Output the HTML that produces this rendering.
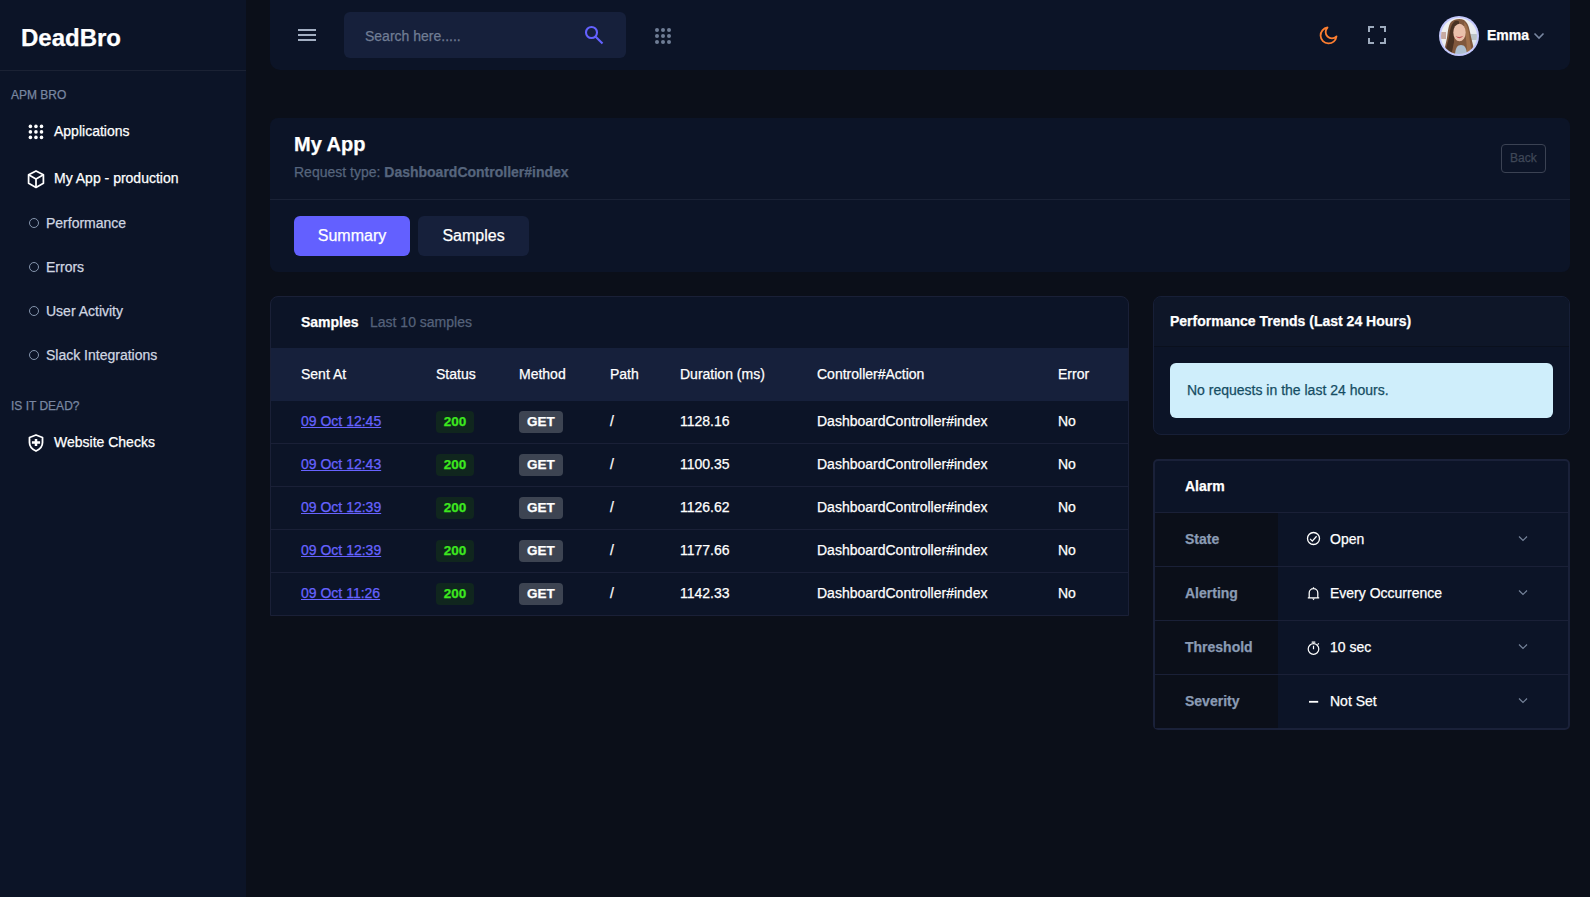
<!DOCTYPE html>
<html>
<head>
<meta charset="utf-8">
<style>
*{box-sizing:border-box;margin:0;padding:0}
html,body{width:1590px;height:897px;overflow:hidden}
body{-webkit-text-stroke:0.25px currentColor;background:#0b0f19;font-family:"Liberation Sans",sans-serif;font-size:14px;color:#fff;position:relative}
.abs{position:absolute}
.t{position:absolute;white-space:nowrap;line-height:1}
/* sidebar */
#sb{position:absolute;left:0;top:0;width:246px;height:897px;background:#0c1427}
#sb .div{position:absolute;left:0;top:70px;width:246px;height:1px;background:#1b2234}
.logo{left:21px;top:26px;font-size:24px;font-weight:bold;color:#fff}
.sec{font-size:12px;color:#7987a1;left:11px}
.nav{font-size:14px;color:#fff}
.nav2{font-size:14px;color:#d0d6e1}
.circ{position:absolute;width:10px;height:10px;border:1px solid #8595ad;border-radius:50%}
/* header */
#hdr{position:absolute;left:270px;top:-20px;width:1300px;height:90px;background:#0c1427;border-radius:10px}
#search{position:absolute;left:344px;top:12px;width:282px;height:46px;background:#16203b;border-radius:6px}
/* cards */
.card{position:absolute;background:#0c1427;border-radius:8px}
.btn{position:absolute;height:40px;border-radius:6px;font-size:16px;color:#fff;line-height:40px;text-align:center}
table{border-collapse:separate;border-spacing:0;table-layout:fixed}
.tbl{position:absolute;left:271px;top:348px;width:857px}
.tbl th{height:53px;background:#16203b;font-weight:normal;text-align:left;font-size:14px;color:#fff;padding:0 0 2px 0}
.tbl td{height:43px;border-bottom:1px solid #1a2037;font-size:14px;color:#fff;padding:0 0 2px 0;vertical-align:middle}
.tbl a{color:#6763ff;text-decoration:underline}
.b200{position:relative;top:1px;display:inline-block;width:38px;height:22px;line-height:22px;border-radius:4px;background:#10261e;color:#3de81e;font-weight:bold;font-size:13.5px;text-align:center}
.bget{position:relative;top:1px;display:inline-block;width:44px;height:22px;line-height:22px;border-radius:4px;background:#3d4452;color:#fff;font-weight:bold;font-size:13.5px;text-align:center}
.arow{position:absolute;left:1155px;width:413px;height:54px;border-top:1px solid #1a2037}
.arow .lab{position:absolute;left:0;top:0;width:123px;height:53px;background:#0b0f19}
.arow .lt{position:absolute;left:30px;top:19px;font-size:14px;font-weight:bold;color:#8a9bb4;line-height:1}
.arow .vt{position:absolute;left:175px;top:19px;font-size:14px;color:#fff;line-height:1}
.arow svg{position:absolute}
</style>
</head>
<body>
<div id="sb">
  <div class="t logo">DeadBro</div>
  <div class="div"></div>
  <div class="t sec" style="top:89px">APM BRO</div>
  <svg class="abs" style="left:28px;top:124px" width="16" height="16" viewBox="0 0 16 16" fill="#fff"><circle cx="2.4" cy="2.4" r="1.8"/><circle cx="7.95" cy="2.4" r="1.8"/><circle cx="13.5" cy="2.4" r="1.8"/><circle cx="2.4" cy="7.9" r="1.8"/><circle cx="7.95" cy="7.9" r="1.8"/><circle cx="13.5" cy="7.9" r="1.8"/><circle cx="2.4" cy="13.4" r="1.8"/><circle cx="7.95" cy="13.4" r="1.8"/><circle cx="13.5" cy="13.4" r="1.8"/></svg>
  <div class="t nav" style="left:54px;top:124px">Applications</div>
  <svg class="abs" style="left:27px;top:169px" width="18" height="20" viewBox="0 0 18 20" fill="none" stroke="#fff" stroke-width="1.75" stroke-linejoin="round">
    <path d="M9 1.9 L16.4 5.8 V14.3 L9 18.4 L1.6 14.3 V5.8 Z"/><path d="M1.6 5.8 L9 9.9 L16.4 5.8 M9 9.9 V18.4"/>
  </svg>
  <div class="t nav" style="left:54px;top:171px">My App - production</div>
  <div class="circ" style="left:29px;top:218px"></div>
  <div class="t nav2" style="left:46px;top:216px">Performance</div>
  <div class="circ" style="left:29px;top:262px"></div>
  <div class="t nav2" style="left:46px;top:260px">Errors</div>
  <div class="circ" style="left:29px;top:306px"></div>
  <div class="t nav2" style="left:46px;top:304px">User Activity</div>
  <div class="circ" style="left:29px;top:350px"></div>
  <div class="t nav2" style="left:46px;top:348px">Slack Integrations</div>
  <div class="t sec" style="top:400px">IS IT DEAD?</div>
  <svg class="abs" style="left:28px;top:434px" width="16" height="18" viewBox="0 0 16 18">
    <path d="M8 1 L14.5 3.5 V8.5 C14.5 12.5 11.5 15.5 8 17 C4.5 15.5 1.5 12.5 1.5 8.5 V3.5 Z" fill="none" stroke="#fff" stroke-width="1.8" stroke-linejoin="round"/>
    <path d="M8 4.9 V12.1 M3.9 8.5 H12.1" stroke="#fff" stroke-width="2.5"/>
  </svg>
  <div class="t nav" style="left:54px;top:435px">Website Checks</div>
</div>

<div id="hdr"></div>
<svg class="abs" style="left:298px;top:29px" width="18" height="12" viewBox="0 0 18 12" fill="#a3afc2">
  <rect x="0" y="0" width="18" height="2"/><rect x="0" y="5" width="18" height="2"/><rect x="0" y="10" width="18" height="2"/>
</svg>
<div id="search"></div>
<div class="t" style="left:365px;top:29px;font-size:14px;color:#707d94">Search here.....</div>
<svg class="abs" style="left:584px;top:25px" width="20" height="20" viewBox="0 0 20 20" fill="none" stroke="#6461ff" stroke-width="2.1">
  <circle cx="7.5" cy="7.5" r="5.5"/><path d="M11.4 11.4 L18.5 18.5"/>
</svg>
<svg class="abs" style="left:655px;top:28px" width="16" height="16" viewBox="0 0 16 16" fill="#6f7d95">
  <circle cx="2" cy="2" r="2"/><circle cx="8" cy="2" r="2"/><circle cx="14" cy="2" r="2"/>
  <circle cx="2" cy="8" r="2"/><circle cx="8" cy="8" r="2"/><circle cx="14" cy="8" r="2"/>
  <circle cx="2" cy="14" r="2"/><circle cx="8" cy="14" r="2"/><circle cx="14" cy="14" r="2"/>
</svg>
<svg class="abs" style="left:1318px;top:26px" width="20" height="20" viewBox="0 0 20 20" fill="none" stroke="#fd7e30" stroke-width="1.8" stroke-linejoin="round">
  <path d="M9.5 1.5 A8 8 0 1 0 18.5 10.5 A6.3 6.3 0 0 1 9.5 1.5 Z"/>
</svg>
<svg class="abs" style="left:1367px;top:25px" width="20" height="20" viewBox="0 0 20 20" fill="none" stroke="#9eabbe" stroke-width="2">
  <path d="M2 7 V2 H7 M13 2 H18 V7 M18 13 V18 H13 M7 18 H2 V13"/>
</svg>
<svg class="abs" style="left:1439px;top:16px" width="40" height="40" viewBox="0 0 40 40">
  <defs><clipPath id="avc"><circle cx="20" cy="20" r="18"/></clipPath>
  <filter id="avb" x="-20%" y="-20%" width="140%" height="140%"><feGaussianBlur stdDeviation="0.55"/></filter>
  <linearGradient id="avbg" x1="0" y1="0" x2="1" y2="1"><stop offset="0" stop-color="#f4f2ef"/><stop offset="0.6" stop-color="#e9ecee"/><stop offset="1" stop-color="#d4dde3"/></linearGradient></defs>
  <circle cx="20" cy="20" r="20" fill="#c4c8fc"/>
  <g clip-path="url(#avc)">
    <rect x="0" y="0" width="40" height="40" fill="url(#avbg)"/>
    <g filter="url(#avb)">
    <rect x="1" y="16" width="6" height="7" fill="#c8aaa2"/>
    <rect x="30" y="18" width="9" height="6" fill="#bcc4c6"/>
    <path d="M5 40 C5 33 7 27 8 22 C9 16 9 10 12 6 C15 3 21 2 25 4 C29 7 30 11 31 16 C32 22 34 28 35 34 L35 40 Z" fill="#80583c"/>
    <path d="M6 38 C7 31 9 26 10 21 C11 14 12 8 16 5 C19 4 21 5 20 8 C17 12 15 18 15 26 C14 31 13 36 12 40 Z" fill="#4a3024"/>
    <path d="M25 6 C29 10 30 16 30.5 22 C31 28 33 32 32 38 L28 38 C28 30 27 22 26 14 Z" fill="#a0704c"/>
    <ellipse cx="20.5" cy="16.5" rx="6.2" ry="8.8" fill="#eac0ab"/>
    <path d="M16.5 20 Q20.5 24.5 24.5 19.8 Q20.5 22 16.5 20 Z" fill="#c04f55"/>
    <path d="M16 40 C16 32 18.5 29 22 29 C25.5 29 28 32 28 40 Z" fill="#aebfd0"/>
    </g>
  </g>
</svg>
<div class="t" style="left:1487px;top:28px;font-size:14px;font-weight:bold;color:#fff">Emma</div>
<svg class="abs" style="left:1533px;top:32px" width="12" height="8" viewBox="0 0 12 8" fill="none" stroke="#7987a1" stroke-width="1.6">
  <path d="M1.5 1.5 L6 6 L10.5 1.5"/>
</svg>

<!-- title card -->
<div class="card" style="left:270px;top:118px;width:1300px;height:154px"></div>
<div class="t" style="left:294px;top:134px;font-size:20px;font-weight:bold;color:#fff">My App</div>
<div class="t" style="left:294px;top:165px;font-size:14px;color:#56657d">Request type: <b>DashboardController#index</b></div>
<div class="abs" style="left:1501px;top:144px;width:45px;height:29px;border:1px solid #3b4253;border-radius:4px"></div>
<div class="t" style="left:1510px;top:152px;font-size:12px;color:#3f4757">Back</div>
<div class="abs" style="left:270px;top:199px;width:1300px;height:1px;background:#1a2236"></div>
<div class="btn" style="left:294px;top:216px;width:116px;background:#6360ff">Summary</div>
<div class="btn" style="left:418px;top:216px;width:111px;background:#16203b">Samples</div>

<!-- samples card -->
<div class="card" style="left:270px;top:296px;width:859px;height:320px;border:1px solid #1a2037;border-radius:8px 8px 0 0"></div>
<div class="t" style="left:301px;top:315px;font-size:14px;font-weight:bold;color:#fff">Samples</div>
<div class="t" style="left:370px;top:315px;font-size:14px;color:#55627a">Last 10 samples</div>
<table class="tbl">
  <colgroup><col style="width:165px"><col style="width:83px"><col style="width:91px"><col style="width:70px"><col style="width:137px"><col style="width:241px"><col style="width:70px"></colgroup>
  <tr><th style="padding-left:30px">Sent At</th><th>Status</th><th>Method</th><th>Path</th><th>Duration (ms)</th><th>Controller#Action</th><th>Error</th></tr>
  <tr><td style="padding-left:30px"><a>09 Oct 12:45</a></td><td><span class="b200">200</span></td><td><span class="bget">GET</span></td><td>/</td><td>1128.16</td><td>DashboardController#index</td><td>No</td></tr>
  <tr><td style="padding-left:30px"><a>09 Oct 12:43</a></td><td><span class="b200">200</span></td><td><span class="bget">GET</span></td><td>/</td><td>1100.35</td><td>DashboardController#index</td><td>No</td></tr>
  <tr><td style="padding-left:30px"><a>09 Oct 12:39</a></td><td><span class="b200">200</span></td><td><span class="bget">GET</span></td><td>/</td><td>1126.62</td><td>DashboardController#index</td><td>No</td></tr>
  <tr><td style="padding-left:30px"><a>09 Oct 12:39</a></td><td><span class="b200">200</span></td><td><span class="bget">GET</span></td><td>/</td><td>1177.66</td><td>DashboardController#index</td><td>No</td></tr>
  <tr><td style="padding-left:30px"><a>09 Oct 11:26</a></td><td><span class="b200">200</span></td><td><span class="bget">GET</span></td><td>/</td><td>1142.33</td><td>DashboardController#index</td><td>No</td></tr>
</table>

<!-- perf trends -->
<div class="card" style="left:1153px;top:296px;width:417px;height:139px;border:1px solid #171f37"></div>
<div class="abs" style="left:1154px;top:297px;width:415px;height:50px;background:#0e1628;border-radius:7px 7px 0 0;border-bottom:1px solid #0a101d"></div>
<div class="t" style="left:1170px;top:314px;font-size:14px;font-weight:bold;color:#fff">Performance Trends (Last 24 Hours)</div>
<div class="abs" style="left:1170px;top:363px;width:383px;height:55px;background:#cfeefb;border-radius:6px"></div>
<div class="t" style="left:1187px;top:383px;font-size:14px;color:#154d63">No requests in the last 24 hours.</div>

<!-- alarm -->
<div class="card" style="left:1153px;top:459px;width:417px;height:271px;border:2px solid #1a2139;border-radius:5px"></div>
<div class="t" style="left:1185px;top:479px;font-size:14px;font-weight:bold;color:#fff">Alarm</div>
<div class="arow" style="top:512px">
  <div class="lab"></div><div class="lt">State</div>
  <svg style="left:151px;top:18px" width="15" height="15" viewBox="0 0 15 15" fill="none" stroke="#fff" stroke-width="1.3"><circle cx="7.5" cy="7.5" r="6"/><path d="M4.1 7.9 L6.3 10.1 L10.6 5.2"/></svg>
  <div class="vt">Open</div><svg style="left:363px;top:22px" width="10" height="7" viewBox="0 0 10 7" fill="none" stroke="#76849b" stroke-width="1.15"><path d="M1 1.5 L5 5.5 L9 1.5"/></svg>
</div>
<div class="arow" style="top:566px">
  <div class="lab"></div><div class="lt">Alerting</div>
  <svg style="left:152px;top:19px" width="13" height="16" viewBox="0 0 13 16" fill="none" stroke="#fff" stroke-width="1.25"><path d="M2.2 11.5 V7 A4.3 4.3 0 0 1 10.8 7 V11.5 M0.8 11.9 H12.2 M6.5 1.3 V2.7"/><path d="M5.2 12.5 L6.5 14.3 L7.8 12.5 Z" fill="#fff" stroke="none"/></svg>
  <div class="vt">Every Occurrence</div><svg style="left:363px;top:22px" width="10" height="7" viewBox="0 0 10 7" fill="none" stroke="#76849b" stroke-width="1.15"><path d="M1 1.5 L5 5.5 L9 1.5"/></svg>
</div>
<div class="arow" style="top:620px">
  <div class="lab"></div><div class="lt">Threshold</div>
  <svg style="left:152px;top:20px" width="14" height="15" viewBox="0 0 14 15" fill="none" stroke="#fff" stroke-width="1.2"><circle cx="6.5" cy="8" r="5.3"/><path d="M4.7 1.2 H8.3 M6.5 4.8 V8.2 M10.6 3.6 L11.8 2.4"/></svg>
  <div class="vt">10 sec</div><svg style="left:363px;top:22px" width="10" height="7" viewBox="0 0 10 7" fill="none" stroke="#76849b" stroke-width="1.15"><path d="M1 1.5 L5 5.5 L9 1.5"/></svg>
</div>
<div class="arow" style="top:674px">
  <div class="lab"></div><div class="lt">Severity</div>
  <svg style="left:152px;top:25px" width="12" height="3" viewBox="0 0 12 3"><rect x="2" y="0.9" width="9.2" height="1.8" fill="#fff"/></svg>
  <div class="vt">Not Set</div><svg style="left:363px;top:22px" width="10" height="7" viewBox="0 0 10 7" fill="none" stroke="#76849b" stroke-width="1.15"><path d="M1 1.5 L5 5.5 L9 1.5"/></svg>
</div>
</body>
</html>
